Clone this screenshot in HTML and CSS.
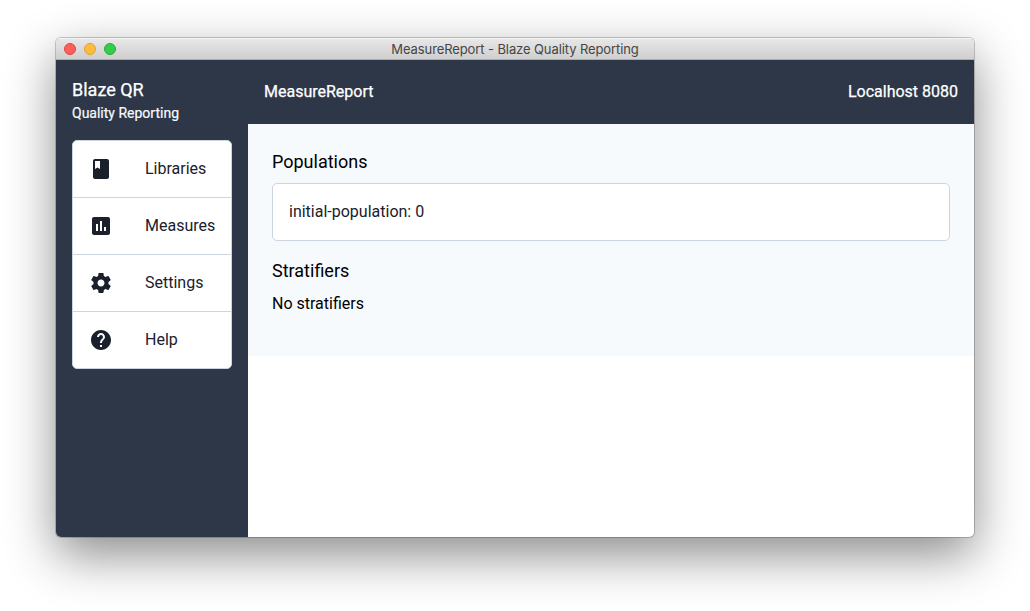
FILE: index.html
```html
<!DOCTYPE html>
<html lang="en">
<head>
<meta charset="utf-8">
<title>MeasureReport - Blaze Quality Reporting</title>
<link rel="stylesheet" href="styles.css">
</head>
<body>
<div class="window">
  <div class="titlebar">
    <div class="lights">
      <span class="light light-close"></span>
      <span class="light light-min"></span>
      <span class="light light-max"></span>
    </div>
    <div class="window-title">MeasureReport - Blaze Quality Reporting</div>
  </div>
  <div class="app">
    <aside class="sidebar">
      <div class="brand">Blaze QR</div>
      <div class="tagline">Quality Reporting</div>
      <nav class="menu">
        <a class="menu-item"><svg class="icon" viewBox="0 0 24 24"><path d="M18 2H6c-1.1 0-2 .9-2 2v16c0 1.1.9 2 2 2h12c1.1 0 2-.9 2-2V4c0-1.1-.9-2-2-2zM6 4h5v8l-2.5-1.5L6 12V4z"/></svg><span>Libraries</span></a>
        <a class="menu-item"><svg class="icon" viewBox="0 0 24 24"><path d="M19 3H5c-1.1 0-2 .9-2 2v14c0 1.1.9 2 2 2h14c1.1 0 2-.9 2-2V5c0-1.1-.9-2-2-2zM9 17H7v-7h2v7zm4 0h-2V7h2v10zm4 0h-2v-4h2v4z"/></svg><span>Measures</span></a>
        <a class="menu-item"><svg class="icon" viewBox="0 0 24 24"><path d="M19.43 12.98c.04-.32.07-.64.07-.98s-.03-.66-.07-.98l2.11-1.65c.19-.15.24-.42.12-.64l-2-3.46c-.12-.22-.39-.3-.61-.22l-2.49 1c-.52-.4-1.08-.73-1.69-.98l-.38-2.65C14.46 2.18 14.25 2 14 2h-4c-.25 0-.46.18-.49.42l-.38 2.65c-.61.25-1.17.59-1.69.98l-2.49-1c-.23-.09-.49 0-.61.22l-2 3.46c-.13.22-.07.49.12.64l2.11 1.65c-.04.32-.07.65-.07.98s.03.66.07.98l-2.11 1.65c-.19.15-.24.42-.12.64l2 3.46c.12.22.39.3.61.22l2.49-1c.52.4 1.08.73 1.69.98l.38 2.65c.03.24.24.42.49.42h4c.25 0 .46-.18.49-.42l.38-2.65c.61-.25 1.17-.59 1.69-.98l2.49 1c.23.09.49 0 .61-.22l2-3.46c.12-.22.07-.49-.12-.64l-2.11-1.65zM12 15.5c-1.93 0-3.5-1.57-3.5-3.5s1.57-3.5 3.5-3.5 3.5 1.57 3.5 3.5-1.57 3.5-3.5 3.5z"/></svg><span>Settings</span></a>
        <a class="menu-item"><svg class="icon" viewBox="0 0 24 24"><path d="M12 2C6.48 2 2 6.48 2 12s4.48 10 10 10 10-4.48 10-10S17.52 2 12 2zm1 17h-2v-2h2v2zm2.07-7.75l-.9.92C13.45 12.9 13 13.5 13 15h-2v-.5c0-1.1.45-2.1 1.17-2.83l1.24-1.26c.37-.36.59-.86.59-1.41 0-1.1-.9-2-2-2s-2 .9-2 2H8c0-2.21 1.79-4 4-4s4 1.79 4 4c0 .88-.36 1.68-.93 2.25z"/></svg><span>Help</span></a>
      </nav>
    </aside>
    <div class="main">
      <header class="topbar"><span>MeasureReport</span><span>Localhost 8080</span></header>
      <section class="content">
        <h2 class="heading">Populations</h2>
        <div class="card">initial-population: 0</div>
        <h2 class="heading">Stratifiers</h2>
        <p class="empty">No stratifiers</p>
      </section>
    </div>
  </div>
</div>
</body>
</html>
```
FILE: styles.css
```css
* { box-sizing: border-box; }
html { height: 100%; overflow: hidden; background: #fff; }
body {
  margin: 0;
  padding: 38px 56px 74px;
  height: 100%;
  font: 16px/24px Roboto, sans-serif;
  color: #000;
}
.window {
  display: flex;
  flex-direction: column;
  height: 499px;
  border-radius: 5px;
  background: #fff;
  box-shadow: 0 0 0 1px rgba(0, 0, 0, .2), 0 18px 50px rgba(0, 0, 0, .46);
  overflow: hidden;
}
.titlebar {
  display: grid;
  grid-template-columns: 60px 1fr 60px;
  align-items: center;
  flex: none;
  height: 22px;
  background: linear-gradient(#e7e7e7, #cfcfcf);
  border-top: 1px solid #f4f4f4;
  border-bottom: 1px solid #adadad;
}
.lights { display: flex; gap: 8px; padding-left: 8px; }
.light { width: 12px; height: 12px; border-radius: 50%; border: 1px solid; }
.light-close { background: #fc605c; border-color: #e0443f; }
.light-min { background: #fdbc40; border-color: #dfa032; }
.light-max { background: #35cc4b; border-color: #28ad36; }
.window-title {
  font: 13px/20px Inter, sans-serif;
  letter-spacing: -.1px;
  color: #454545;
  text-align: center;
  white-space: nowrap;
}
.app { display: flex; flex: 1; min-height: 0; }
.sidebar {
  flex: none;
  width: 192px;
  padding: 16px;
  background: #2d3748;
  color: #fff;
}
.brand { font-size: 18px; line-height: 27px; -webkit-text-stroke: .25px #fff; }
.tagline { font-size: 14px; line-height: 21px; color: #f7fafc; -webkit-text-stroke: .2px #f7fafc; }
.menu {
  margin-top: 16px;
  background: #fff;
  border: 1px solid #cbd5e0;
  border-radius: 5px;
  color: #1a202c;
}
.menu-item {
  display: flex;
  align-items: center;
  gap: 32px;
  height: 57px;
  padding: 0 16px;
}
.menu-item:not(:last-child) { border-bottom: 1px solid #cbd5e0; }
.menu-item:last-child { height: 56px; }
.icon { width: 24px; height: 24px; flex: none; fill: #1a202c; }
.main { flex: 1; }
.topbar {
  display: flex;
  justify-content: space-between;
  align-items: center;
  height: 64px;
  padding: 0 16px;
  background: #2d3748;
  color: #fff;
  -webkit-text-stroke: .25px #fff;
}
.content { height: 232px; padding: 24px; background: #f6fafd; }
.heading { margin: 0; font-size: 18px; line-height: 27px; font-weight: 400; }
.card {
  height: 58px;
  margin: 8px 0 16px;
  padding: 16px;
  background: #fff;
  border: 1px solid #cbd5e0;
  border-radius: 5px;
  color: #1a202c;
}
.empty { margin: 8px 0 0; }
```
